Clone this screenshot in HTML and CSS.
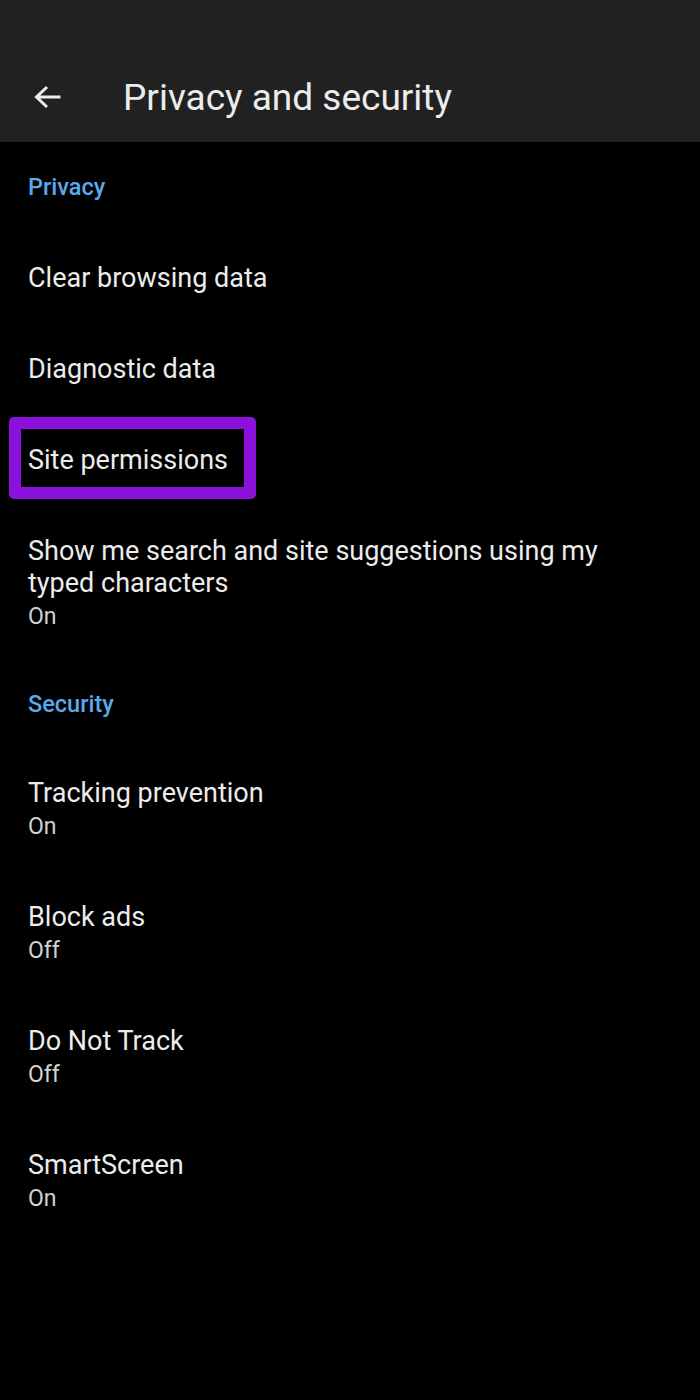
FILE: index.html
```html
<!DOCTYPE html>
<html lang="en">
<head>
<meta charset="utf-8">
<title>Privacy and security</title>
<link rel="stylesheet" href="styles.css">
</head>
<body>
<header class="appbar">
  <div class="bar-row">
    <svg class="back" width="28" height="24" viewBox="0 0 28 24" aria-hidden="true">
      <path d="M26.5 12H3 M13 2 L2.5 12 L13 22" fill="none" stroke="#ececec" stroke-width="3" stroke-linecap="butt" stroke-linejoin="miter"/>
    </svg>
    <h1 class="title">Privacy and security</h1>
  </div>
</header>
<main class="list">
  <div class="section first">Privacy</div>
  <div class="item"><div class="label">Clear browsing data</div></div>
  <div class="item"><div class="label">Diagnostic data</div></div>
  <div class="item marked"><div class="label">Site permissions</div><span class="highlight"></span></div>
  <div class="item"><div class="label">Show me search and site suggestions using my typed characters</div><div class="sub">On</div></div>
  <div class="section">Security</div>
  <div class="item"><div class="label">Tracking prevention</div><div class="sub">On</div></div>
  <div class="item"><div class="label">Block ads</div><div class="sub">Off</div></div>
  <div class="item"><div class="label">Do Not Track</div><div class="sub">Off</div></div>
  <div class="item"><div class="label">SmartScreen</div><div class="sub">On</div></div>
</main>
</body>
</html>
```
FILE: styles.css
```css
html, body {
  margin: 0;
  padding: 0;
  background: #000;
}
body {
  width: 700px;
  min-height: 1400px;
  font-family: Roboto, "Noto Sans", "Liberation Sans", sans-serif;
  color: #ececec;
}
.appbar {
  background: #212121;
  height: 142px;
  padding-top: 52px;
  box-sizing: border-box;
}
.bar-row {
  height: 90px;
  display: flex;
  align-items: center;
  padding-left: 34px;
}
.back {
  display: block;
  flex: none;
}
.title {
  margin: 0 0 0 61px;
  font-weight: 400;
  font-size: 37px;
  color: #ececec;
  letter-spacing: 0;
}
.list {
  display: flex;
  flex-direction: column;
}
.section {
  height: 86px;
  display: flex;
  align-items: center;
  padding-left: 28px;
  font-size: 23.5px;
  font-weight: 500;
  color: #5ba8ec;
}
.section.first {
  height: 90px;
}
.item {
  position: relative;
  padding: 30px 28px 29px 28px;
}
.label {
  font-size: 27px;
  line-height: 32px;
  color: #ececec;
  max-width: 600px;
}
.sub {
  margin-top: 3px;
  font-size: 23px;
  line-height: 30px;
  color: #d2d2d2;
}
.highlight {
  position: absolute;
  left: 9px;
  top: 3px;
  width: 247px;
  height: 82px;
  box-sizing: border-box;
  border: 12px solid #8a12dc;
  border-radius: 5px;
}
```
